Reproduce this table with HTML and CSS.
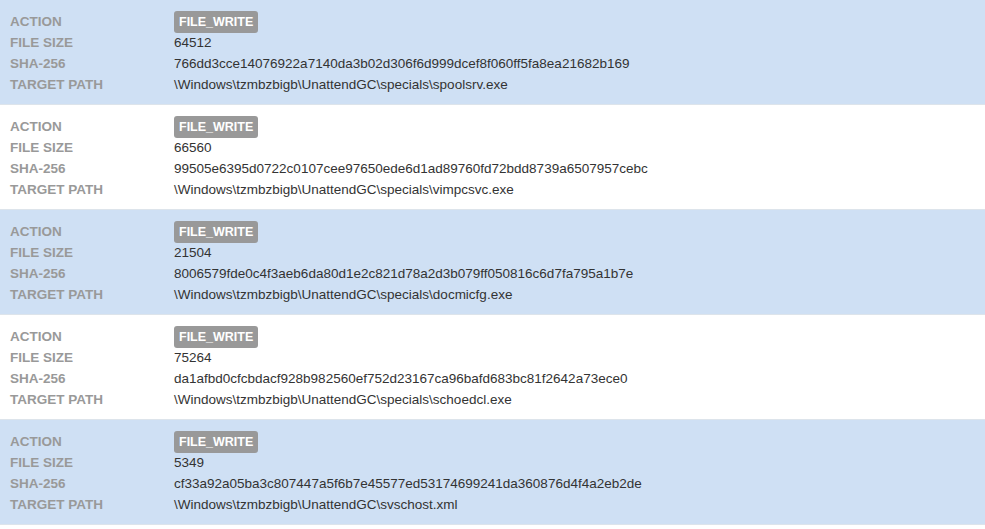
FILE: index.html
```html
<!DOCTYPE html>
<html lang="en">
<head>
  <meta charset="UTF-8" />
  <title>File writes</title>
  <link rel="stylesheet" href="styles.css">
</head>
<body>

<div class="events">
  <div class="event">
    <div class="label">ACTION</div><div class="value"><span class="badge">FILE_WRITE</span></div>
    <div class="label">FILE SIZE</div><div class="value">64512</div>
    <div class="label">SHA-256</div><div class="value">766dd3cce14076922a7140da3b02d306f6d999dcef8f060ff5fa8ea21682b169</div>
    <div class="label">TARGET PATH</div><div class="value">\Windows\tzmbzbigb\UnattendGC\specials\spoolsrv.exe</div>
  </div>
  <div class="event">
    <div class="label">ACTION</div><div class="value"><span class="badge">FILE_WRITE</span></div>
    <div class="label">FILE SIZE</div><div class="value">66560</div>
    <div class="label">SHA-256</div><div class="value">99505e6395d0722c0107cee97650ede6d1ad89760fd72bdd8739a6507957cebc</div>
    <div class="label">TARGET PATH</div><div class="value">\Windows\tzmbzbigb\UnattendGC\specials\vimpcsvc.exe</div>
  </div>
  <div class="event">
    <div class="label">ACTION</div><div class="value"><span class="badge">FILE_WRITE</span></div>
    <div class="label">FILE SIZE</div><div class="value">21504</div>
    <div class="label">SHA-256</div><div class="value">8006579fde0c4f3aeb6da80d1e2c821d78a2d3b079ff050816c6d7fa795a1b7e</div>
    <div class="label">TARGET PATH</div><div class="value">\Windows\tzmbzbigb\UnattendGC\specials\docmicfg.exe</div>
  </div>
  <div class="event">
    <div class="label">ACTION</div><div class="value"><span class="badge">FILE_WRITE</span></div>
    <div class="label">FILE SIZE</div><div class="value">75264</div>
    <div class="label">SHA-256</div><div class="value">da1afbd0cfcbdacf928b982560ef752d23167ca96bafd683bc81f2642a73ece0</div>
    <div class="label">TARGET PATH</div><div class="value">\Windows\tzmbzbigb\UnattendGC\specials\schoedcl.exe</div>
  </div>
  <div class="event">
    <div class="label">ACTION</div><div class="value"><span class="badge">FILE_WRITE</span></div>
    <div class="label">FILE SIZE</div><div class="value">5349</div>
    <div class="label">SHA-256</div><div class="value">cf33a92a05ba3c807447a5f6b7e45577ed53174699241da360876d4f4a2eb2de</div>
    <div class="label">TARGET PATH</div><div class="value">\Windows\tzmbzbigb\UnattendGC\svschost.xml</div>
  </div>
</div>

</body>
</html>
```

FILE: styles.css
```css
body {
  margin: 0;
  font-family: 'Liberation Sans', Arial, sans-serif;
  font-size: 13.5px;
  background: white;
}

.event {
  display: grid;
  grid-template-columns: 164px 1fr;
  grid-auto-rows: 21px;
  align-items: center;
  padding: 11px 0 9px 10px;
  border-bottom: 1px solid #dde4eb;
}

.event:nth-child(odd) {
  background: #cfe0f4;
}

.label {
  font-weight: bold;
  color: #999;
}

.value {
  color: #333;
  white-space: nowrap;
}

.badge {
  display: inline-block;
  background: #999;
  color: white;
  font-weight: bold;
  font-size: 12.5px;
  line-height: 22px;
  padding: 0 5px;
  border-radius: 3px;
}
```
